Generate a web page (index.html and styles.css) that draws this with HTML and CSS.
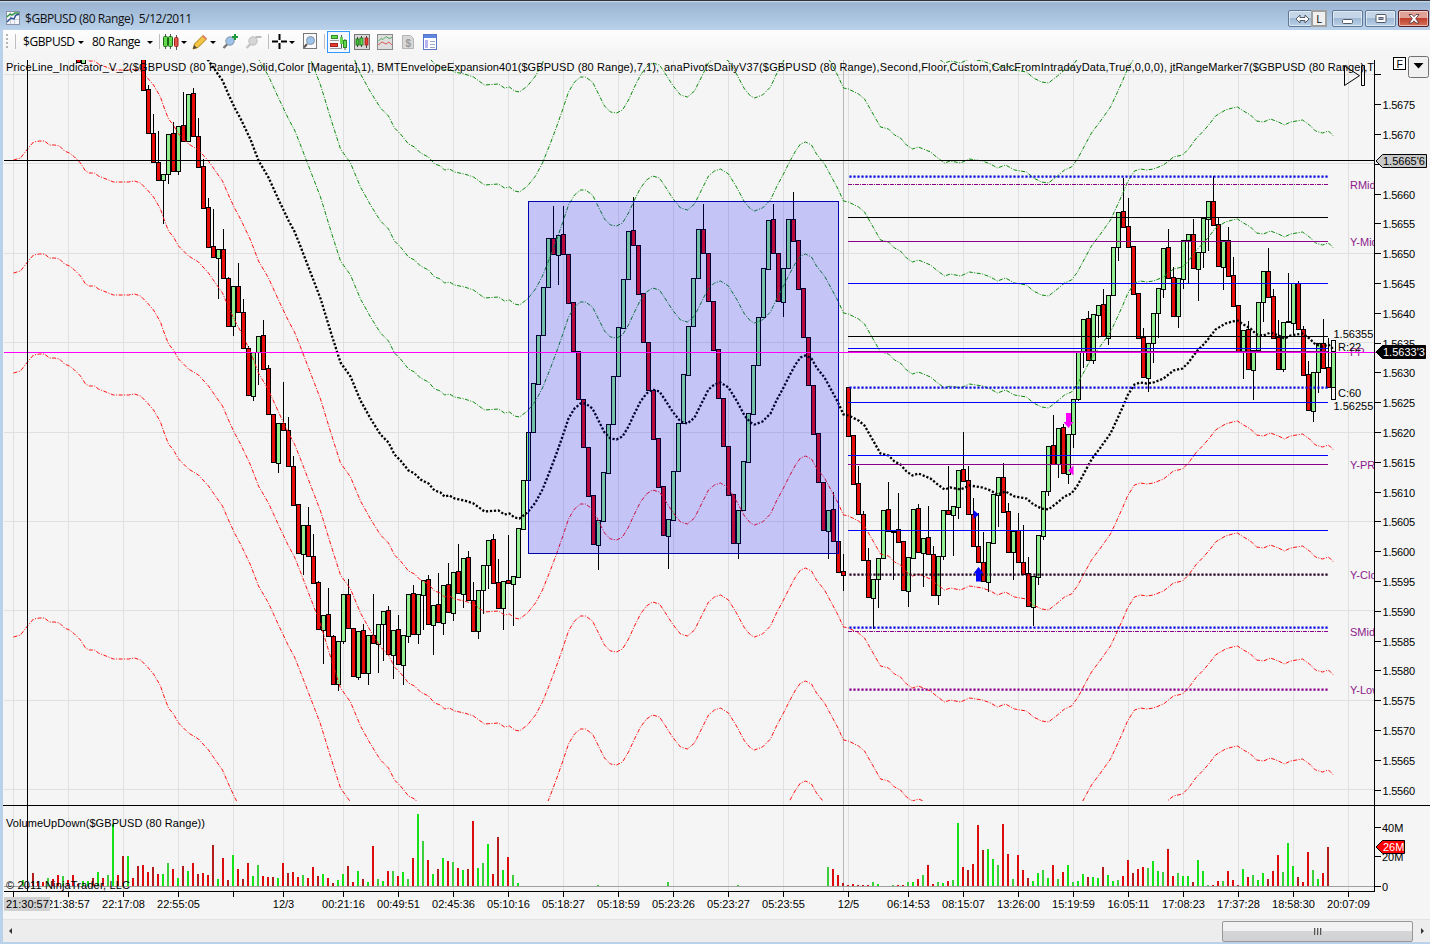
FILE: index.html
```html
<!DOCTYPE html>
<html lang="en">
<head>
  <meta charset="UTF-8">
  <title>$GBPUSD (80 Range)</title>
  <link rel="stylesheet" href="styles.css">
</head>
<body>
  <div class="window">
    <div class="titlebar">
      <svg class="app-icon" width="14" height="14" viewBox="0 0 14 14">
        <rect x=".5" y=".5" width="13" height="13" fill="#f4f6fa" stroke="#8a94a8"/>
        <path d="M1 4.5h12M1 8.5h12M4.5 1v12M8.5 1v12" stroke="#c9cfdd" fill="none"/>
        <path d="M1 6l3-3 2 1 3-2 4 0" stroke="#2f9a3c" stroke-width="1.4" fill="none"/>
        <path d="M1 11l4-4 3 1 2-4 3-1" stroke="#2b4f93" stroke-width="1.4" fill="none"/>
      </svg>
      <span class="title">$GBPUSD (80 Range)&nbsp; 5/12/2011</span>
      <div class="caption">
        <div class="btn link">
          <svg width="16" height="10" viewBox="0 0 16 10"><path d="M1 5l4-4v2.500h5v-2.500l4 4-4 4v-2.500h-5v2.500z" fill="#fff" stroke="#555b66"/></svg>
          <span class="link-letter">L</span>
        </div>
        <div class="btn">
          <svg width="12" height="12" viewBox="0 0 12 12"><rect x=".5" y="6.500" width="10" height="4" rx="1" fill="#fff" stroke="#555b66"/></svg>
        </div>
        <div class="btn">
          <svg width="12" height="10" viewBox="0 0 12 10"><rect x="1" y=".5" width="10" height="8" rx="1" fill="#fff" stroke="#555b66"/><rect x="4" y="3.500" width="4" height="2" fill="#8fa9c6" stroke="#555b66"/></svg>
        </div>
        <div class="btn close">
          <svg width="12" height="10" viewBox="0 0 12 10"><path d="M1 .5h3l2 2.200 2-2.200h3l-3.300 4.300 3.300 4.200h-3l-2-2.200-2 2.200h-3l3.300-4.200z" fill="#fff" stroke="#5b3a40" stroke-width=".9"/></svg>
        </div>
      </div>
    </div>

    <div class="toolbar">
      <span class="grip"></span>
      <span class="sep sep-first"></span>
      <span class="drop drop-symbol">$GBPUSD</span><i class="caret"></i>
      <span class="drop drop-range">80 Range</span><i class="caret"></i>
      <span class="sep"></span>
      <svg class="tool" width="16" height="16" viewBox="0 0 16 16">
        <path d="M2.500 0v15M7.500 0v15M13.500 1v15" stroke="#555"/>
        <rect x=".5" y="2.500" width="4" height="10" rx="1" fill="#62d84e" stroke="#1d6a14"/>
        <rect x="5.500" y="2.500" width="4" height="10" rx="1" fill="#62d84e" stroke="#1d6a14"/>
        <rect x="11.500" y="3.500" width="3.500" height="9" rx="1" fill="#e2574c" stroke="#a3201b"/>
      </svg><i class="caret"></i>
      <svg class="tool tool-pen" width="16" height="16" viewBox="0 0 16 16">
        <path d="M1 15l1.500-5L11 1.500 14.500 5 6 13.500z" fill="#f5c542" stroke="#a97c14"/>
        <path d="M1 15l1.200-3.800 2.700 2.600z" fill="#444"/><path d="M10 2.500L11.500 1 15 4.500 13.500 6z" fill="#e0876d"/>
      </svg><i class="caret"></i>
      <svg class="tool tool-zoomin" width="17" height="17" viewBox="0 0 17 17">
        <path d="M5.500 11L1.500 15" stroke="#777" stroke-width="2.400"/>
        <circle cx="8" cy="8" r="4.200" fill="#9cc4ea" stroke="#8696a8"/>
        <path d="M13 1v6M10 4h6" stroke="#1c9a3b" stroke-width="2"/>
      </svg>
      <svg class="tool tool-zoomout" width="17" height="17" viewBox="0 0 17 17">
        <path d="M5.500 11L1.500 15" stroke="#c4c4c4" stroke-width="2.400"/>
        <circle cx="8" cy="8" r="4.200" fill="#d6d6d6" stroke="#bcbcbc"/>
        <path d="M10.500 4h6" stroke="#bbb" stroke-width="2"/>
      </svg>
      <span class="sep"></span>
      <svg class="tool" width="15" height="15" viewBox="0 0 15 15">
        <path d="M0 7.500h6M9 7.500h6M7.500 0v6M7.500 9v6" stroke="#000" stroke-width="2"/>
      </svg><i class="caret"></i>
      <svg class="tool tool-box" width="16" height="17" viewBox="0 0 16 17">
        <rect x="1.500" y=".5" width="13" height="15" fill="#fafafa" stroke="#777"/>
        <path d="M5 11l-3 3.500" stroke="#555" stroke-width="2"/>
        <circle cx="8.500" cy="7.500" r="4" fill="#9cc4ea" stroke="#8696a8"/>
      </svg>
      <span class="sep"></span>
      <span class="active">
        <svg width="17" height="16" viewBox="0 0 17 16">
          <path d="M11.500 1v13M15 5v11" stroke="#555"/>
          <path d="M0 6.500h9M0 14.500h12" stroke="#999"/>
          <rect x="1.500" y="1.500" width="6" height="3" fill="#62d84e" stroke="#2f8a22"/>
          <rect x=".5" y="9.500" width="7" height="3" fill="#e03c31" stroke="#a3201b"/>
          <rect x="10" y="3" width="3" height="7" fill="#62d84e"/>
          <rect x="13.500" y="6.500" width="3" height="7" fill="#62d84e" stroke="#2f8a22"/>
        </svg>
      </span>
      <svg class="tool tool-frame" width="16" height="16" viewBox="0 0 16 16">
        <rect x=".5" y=".5" width="15" height="15" fill="#d9d9d9" stroke="#777"/>
        <path d="M3.500 3v10M7.500 2v11M12.500 2v12" stroke="#444"/>
        <rect x="2" y="5" width="3" height="6" fill="#3fbf35" stroke="#1d6a14" stroke-width=".8"/>
        <rect x="6" y="4" width="3" height="7" fill="#62d84e" stroke="#1d6a14" stroke-width=".8"/>
        <rect x="11" y="4" width="3" height="7" fill="#e03c31" stroke="#a3201b" stroke-width=".8"/>
      </svg>
      <svg class="tool tool-frame" width="16" height="16" viewBox="0 0 16 16">
        <rect x=".5" y=".5" width="15" height="15" fill="#dedede" stroke="#8a8a8a"/>
        <path d="M1 7.500l3-3 2 1 3-3 3 2 3-1" stroke="#56a860" fill="none"/>
        <path d="M1 11l4-3 4 2 3-2 3 3" stroke="#d95a55" fill="none"/>
      </svg>
      <svg class="tool tool-frame" width="16" height="16" viewBox="0 0 16 16">
        <path d="M2.500 1.500h8l3 3v10h-11z" fill="#d8d8d8" stroke="#b5b5b5"/>
        <text x="8" y="12.500" class="dollar">$</text>
      </svg>
      <svg class="tool tool-frame" width="14" height="16" viewBox="0 0 14 16">
        <rect x=".5" y=".5" width="13" height="15" fill="#fff" stroke="#5b76c4"/>
        <rect x="1" y="1" width="12" height="3" fill="#5c86e0"/>
        <rect x="2" y="6" width="3" height="8" fill="#b8b4f0"/>
        <path d="M7 7.500h5M7 10.500h5M7 13.500h5" stroke="#9aa6c8"/>
      </svg>
    </div>

    <svg id="chart" class="chart" width="1427" height="864" viewBox="3 55 1427 864">
      <defs>
        <clipPath id="plot"><rect x="4" y="60" width="1370" height="741"/></clipPath>
      </defs>
      <g id="grid" class="grid"></g>
      <g clip-path="url(#plot)">
        <g id="candles" class="crisp"></g>
        <g id="bands"></g>
        <g id="levels"></g>
        <g id="markers"></g>
        <rect class="region" x="528.5" y="201.5" width="310" height="352"/>
      </g>
      <g id="volume" class="crisp"></g>
      <g id="axes"></g>
    </svg>

    <div class="scrollbar">
      <i class="arrow left"></i>
      <div class="thumb"><i></i><i></i><i></i></div>
      <i class="arrow right"></i>
    </div>
  </div>
  <script src="chart.js"></script>
</body>
</html>
```
FILE: styles.css
```css
body {
  margin: 0;
  background: #b9d1ea;
  overflow: hidden;
  font-family: "Liberation Sans", Arial, sans-serif;
}

.window {
  box-sizing: border-box;
  width: 1430px;
  height: 944px;
  padding: 0 0 2px 3px;
  border-top: 1px solid #33333b;
  display: flex;
  flex-direction: column;
  background: #b9d1ea;
}

.titlebar {
  height: 29px;
  flex: none;
  margin-left: -3px;
  padding: 0 1px 0 6px;
  display: flex;
  align-items: center;
  background: linear-gradient(#cfdded 0, #9ab4d2 2px, #b9d1ea 100%);
}

.app-icon {
  margin: 4px 5px 0 0;
}

.title {
  font: 12px "Open Sans", sans-serif;
  letter-spacing: -0.44px;
  padding-top: 5px;
  color: #111;
}

.caption {
  margin-left: auto;
  padding-top: 6px;
  display: flex;
  gap: 2px;
}

.btn {
  box-sizing: border-box;
  width: 31px;
  height: 17px;
  display: flex;
  align-items: center;
  justify-content: center;
  border: 1px solid #5f7896;
  border-radius: 2px;
  box-shadow: inset 0 0 0 1px rgba(255, 255, 255, 0.5);
  background: linear-gradient(#c5d6e9 50%, #9fb8d3 50%, #b9d0e8);
}

.link {
  width: 39px;
  margin-right: 3px;
  justify-content: flex-end;
  padding-right: 0;
}

.link-letter {
  box-sizing: border-box;
  width: 16px;
  height: 17px;
  margin-right: -1px;
  border: 2px solid #a0a0a0;
  background: #f0f0f0;
  font: 11px/13px "Open Sans", sans-serif;
  text-align: center;
}

.close {
  border-color: #5a1f26;
  background: linear-gradient(#e0a296 50%, #c0402c 50%, #d2735a);
}

.toolbar {
  box-sizing: border-box;
  height: 25px;
  padding-bottom: 2px;
  flex: none;
  display: flex;
  align-items: center;
  font: 12px "Open Sans", sans-serif;
  letter-spacing: -0.42px;
  background: linear-gradient(#fefefe, #f4f4f4);
}

.grip {
  width: 2px;
  height: 15px;
  margin-left: 3px;
  background: repeating-linear-gradient(#b5b5b5 0 2px, transparent 2px 4px);
}

.sep {
  width: 1px;
  height: 15px;
  margin: 0 3px 0 6px;
  background: #bdbdbd;
}

.sep-first {
  margin: 0 7px;
}

.drop {
  width: 50px;
}

.drop-range {
  margin-left: 8px;
}

.caret {
  flex: none;
  width: 0;
  height: 0;
  border: 3px solid transparent;
  border-top-color: #000;
  border-bottom: 0;
  margin: 1px 0 0 2px;
}

.drop + .caret {
  margin-left: 5px;
}

.tool {
  flex: none;
}

.tool-pen {
  margin-left: 5px;
}

.tool-zoomin {
  margin-left: 6px;
}

.tool-zoomout {
  margin-left: 6px;
}

.tool-box {
  margin-left: 7px;
}

.active {
  box-sizing: border-box;
  width: 23px;
  height: 22px;
  margin: 0 0 0 -1px;
  display: flex;
  align-items: center;
  justify-content: center;
  border: 1px solid #3399ff;
  background: #f3f8fe;
}

.tool-frame {
  margin-left: 4px;
}

.tool-frame + .tool-frame {
  margin-left: 7px;
}

.dollar {
  font: bold 10px "Liberation Sans", sans-serif;
  fill: #9a9a9a;
  text-anchor: middle;
}

/* chart */
.chart {
  flex: none;
  display: block;
  background: #f5f5f5;
  font-size: 11px;
}

.crisp,
.grid {
  shape-rendering: crispEdges;
}

.grid path {
  stroke: #e0e0e0;
}

.grid .session {
  stroke: #b8b8b8;
}

.wick,
.body {
  fill: #000;
}

.up {
  fill: #90ee90;
}

.down {
  fill: #e60c0c;
}

.band {
  fill: none;
  stroke-width: 1;
  stroke-dasharray: 4 1.5 1 1.5;
}

.band.red {
  stroke: #ff1010;
}

.band.green {
  stroke: #0a8a0a;
}

.average {
  fill: none;
  stroke: #000;
  stroke-width: 2.3;
  stroke-dasharray: 2.2 1.8;
}

.axis {
  fill: none;
  stroke: #000;
  shape-rendering: crispEdges;
}

.base {
  stroke: #a0a0a0;
}

.level {
  fill: none;
}

.blue { stroke: #0000ff; }
.black { stroke: #000; }
.purple { stroke: #8b008b; }
.magenta { stroke: #ff00ff; }
.navy { stroke: #0a0ae0; }
.plum { stroke: #22001e; }

.dots {
  stroke-width: 2.2;
  stroke-dasharray: 2.2 1.8;
}

.dashdot {
  stroke-dasharray: 4 1 1 1;
}

.region {
  fill: rgba(0, 0, 255, 0.2);
  stroke: #0000b0;
  shape-rendering: crispEdges;
}

.vol-up { fill: #16e016; }
.vol-up.alt { fill: #3ccf3c; }
.vol-down { fill: #dc0c0c; }
.vol-down.alt { fill: #b41c1c; }

.label {
  fill: #000;
}

.mid {
  text-anchor: middle;
}

.pivot {
  fill: #8b1a8b;
}

.tag-text {
  fill: #fff;
}

/* scrollbar */
.scrollbar {
  flex: 1;
  box-sizing: border-box;
  display: flex;
  align-items: center;
  border-top: 1px solid #e2e2e2;
  background: #ededed;
}

.arrow {
  width: 0;
  height: 0;
  border: 3px solid transparent;
}

.left {
  border-right-color: #333;
  border-left: 0;
  margin-left: 6px;
}

.right {
  border-left-color: #333;
  border-right: 0;
  margin-left: 8px;
  margin-right: 6px;
}

.thumb {
  box-sizing: border-box;
  width: 191px;
  height: 21px;
  margin-left: auto;
  display: flex;
  align-items: center;
  justify-content: center;
  gap: 1px;
  border: 1px solid #979797;
  border-radius: 2px;
  background: linear-gradient(#f2f2f2 45%, #d6d6d8 50%, #d0d0d2);
}

.thumb i {
  width: 2px;
  height: 7px;
  background: linear-gradient(90deg, #555 50%, #bbb 50%);
}
```
FILE: chart.js
```javascript
const NS = "http://www.w3.org/2000/svg";

function add(parent, tag, attrs, text) {
  const el = document.createElementNS(NS, tag);
  for (const k in attrs) el.setAttribute(k, attrs[k]);
  if (text !== undefined) el.textContent = text;
  (typeof parent === "string" ? document.getElementById(parent) : parent).appendChild(el);
  return el;
}

// One candle every 5px: colour + body top, body bottom, tip of the wick
const candles = [
  [78, "r58,62 g58,63"],
  [143, `r50,90 r89,133,85 r133,162,114 r162,180,131 g174,180,223 g134,174,183 r133,171,122 g126,171,174
   r125,141,92 g94,141 r93,136,88 r136,167,118 r166,208,159 r207,247,198 r246,257,209 g249,258,298
   r249,278,229 r278,326,277 g286,326,335 r286,312,263 r312,348,299 r348,395,346 g352,396,400 g336,352,384
   r335,369,320 r368,414,365 r414,462 g423,463,472 r423,430,382 r430,466,417 r466,505,456 r504,553
   g525,554,574 r525,556,507 r556,583,534 r582,629,581 g615,630,663 r614,636,588 r636,684,635 g641,684,690
   g594,641,643 r594,628,579 r628,676 g631,677,679 r630,673,624 g635,673,684 r635,643,594 g624,644,672
   g611,624,660 r610,654,606 g630,655,678 r629,664,615 g635,665,684 g594,636,642 r593,634,585 g594,634,643
   g580,595,629 r579,624,575 g605,625,654 r604,622,573 g585,623,634 r584,612,563 g572,613,620 r571,593,544
   g558,594,607 r557,600,551 r600,631,582 g590,631,638 g565,590,613 g540,565,588 r539,583,534 r582,608,559
   g581,608,629 r580,583,535 g576,584,625 g528,577 g480,529 g432,480 g383,432 g335,384
   g287,335 g238,287 r238,254,206 g235,255,284 r234,254,206 r254,303 r302,351 r351,399
   r399,447 r447,496 r495,544 g520,545,569 g472,521 g424,473 g376,424 g327,376
   g279,328 g231,279 r230,245,197 r245,294 r293,342 r342,390 r390,439 r438,487
   r486,535 g519,536,568 g471,520 g423,471 g374,423 g326,375 g278,326 g229,278
   r229,253,204 r253,301 r301,350 r349,398 r398,446 r446,495 r494,543 g510,543,558
   g461,510 g413,462 g365,414 g317,365 g268,317 g220,269 r219,253,204 r253,301
   g268,302,316 g219,268 r219,241,192 r240,289 r288,337 r337,385 r385,434 r433,482
   r482,530 g510,531,558 r509,541,492 r541,572 r571,575,554,590 r387,436 r435,484 r483,514,466
   r514,560,511 r560,597,548 g579,598,628 g558,579,607 g510,558 r509,531,482 g531,532,579 r529,542,493
   r541,590 g557,591,606 g509,558 r508,552,504 g538,553,586 r537,554,506 r554,595,546 g556,595,604
   g510,556,559 r510,514,466 g506,515,555 g470,507,518 r469,481,432 r480,514,466 r514,546,498 r546,562,513
   r562,581,532 g542,582,591 g494,543 g477,495,526 r477,512,463 r511,552,503 g531,552,579 r530,562,513
   r562,574,525 r573,606,557 g576,607,625 g535,577,584 g491,536,539 g446,491,495 r445,464,415 g428,464,477
   r427,473,424 g434,474,483 g399,434,447 g352,399,400 g319,352,367 r318,360,311 g314,360,363 g305,315,337
   r304,336,289 g295,338,344 g247,295 g212,247,260 r211,227,178 r226,247,198 r246,294 r293,338
   r337,377,328 g343,378,391 g313,343,362 g288,313,337 g248,289,297 r247,278,229 r277,316,267 g278,316,327
   g240,279,288 g234,240,283 r234,268,219 g252,269,300 g218,252,267 g201,219,250 r201,225,176 r224,266,217
   g240,267,289 r240,276,227 r275,306,257 r305,352 g330,352,378 r329,369,321 g350,370,399 g302,350
   g271,302,321 r271,297,248 r296,338,289 r337,369,320 g322,369,371 r321,322,273 g283,323,333 r283,329,281
   r329,375,326 r374,410,361 g372,411,421 g343,372,392 r343,368,319 r367,387,338 g352,387`]
];

// Moving average; the envelopes are the same line shifted up and down
const average = `13,-53 20,-55 27,-64 33,-71 39,-72 44,-72 49,-68 54,-68 59,-67 64,-62 69,-60 74,-56 80,-50 85,-42
  89,-40 94,-40 98,-37 103,-35 108,-33 113,-31 128,-31 134,-32 140,-30 147,-23 153,-16 160,-4 163,5 168,18
  173,24 178,33 188,43 198,49 208,60 217,73 222,80 228,94 234,107 240,118 250,139 258,160 268,177 278,199
  288,220 294,231 300,246 310,272 320,298 331,334 340,362 350,376 360,400 370,418 380,434 388,442 394,454
  400,460 408,470 414,473 420,479 428,483 434,490 440,492 444,496 449,495 454,498 464,500 473,503 484,511
  498,510 504,514 509,513 514,517 519,518 527,512 535,502 542,489 550,469 556,453 562,436 568,418 574,408
  580,403 585,403 592,408 598,420 604,432 610,438 616,439 622,436 628,426 634,413 640,401 646,393 652,389
  659,391 665,400 672,411 680,421 687,423 694,417 700,405 708,389 714,384 720,382 728,387 736,400 744,415
  750,422 754,424 762,421 770,413 776,400 783,387 789,375 795,364 800,357 805,355 811,358 816,367 824,377
  830,388 837,401 843,414 848,415 858,420 864,425 872,439 880,453 888,455 894,461 900,464 906,471 912,475
  918,473 930,478 936,483 944,489 950,487 960,489 969,485 982,487 990,490 997,494 1005,491 1014,496
  1026,498 1033,504 1041,508 1048,509 1057,502 1064,496 1071,493 1077,485 1085,470 1091,459 1100,447
  1110,433 1117,418 1122,407 1127,395 1134,384 1140,382 1146,383 1153,382 1163,378 1173,370 1182,368
  1188,362 1196,351 1203,344 1209,337 1215,329 1225,323 1232,321 1237,320 1243,324 1250,328 1256,334
  1263,335 1270,332 1278,335 1284,338 1290,335 1302,333 1309,338 1315,344 1322,346 1328,344 1333,349`;

// One bar every 5px: colour + height
const volume = [
  [23, `g6`],
  [33, `r13 r5 r4 g8 r7 r11 g10 r6 r11 r2 g5 g5 r8 g14 r8 g11 g62 r11 r30 g30 r8 r20 r21 r14 r19 r12 g12 g23 r17
    g8 r20 g15 r23 r12 r13 r11 r41 g7 r28 r6 g31 r17 r7 r23 g10 g21 r10 r9 r9 g8 r23 r13 r14 r9 g11 r8 r19 r10
    g12 r8 r3 g6 g12 r20 r4 g15 r7 g4 r40 g7 g5 r15 g15 r10 g14 g7 r28 g72 g45 r26 g12 r17 g28 r25 g24 r18 g16
    r17 r65 g18 g23 g42 r12 r49 g16 r29 g11 g3`],
  [598, "g1"], [668, "g4"], [738, "g1"],
  [828, "g19 r17 r11 r3 r1 r2 r1 r1 r1 g4 g2"],
  [893, `g1 r1 r1 g4 g4 r7 g11 r21 r2 g4 g3 r5 g6 g63 r19 r16 r22 r61 r36 g37 g27 g21 r62 r32 g7 r31 r16 r8 g5
    g13 g16 g8 r21 g7 r14 g21 g4 g5 g12 r9 g9 g8 r19 g11 g5 g6 r10 r26 r13 r17 r19 g18 g25 g15 g14 r37 r10 g13
    g10 g10 r4 g26 g15 g1 r1 r5 g5 r15 r6 r1 g17 r9 g11 g6 g13 r7 r15 r31 g14 g43 g20 r9 r4 r34 g16 g7 r13 r39`]
];

const times = [
  [13, ""], [68, "21:38:57"], [123, "22:17:08"], [178, "22:55:05"], [233, ""], [283, "12/3"],
  [343, "00:21:16"], [398, "00:49:51"], [453, "02:45:36"], [508, "05:10:16"], [563, "05:18:27"],
  [618, "05:18:59"], [673, "05:23:26"], [728, "05:23:27"], [783, "05:23:55"], [848, "12/5"],
  [908, "06:14:53"], [963, "08:15:07"], [1018, "13:26:00"], [1073, "15:19:59"], [1128, "16:05:11"],
  [1183, "17:08:23"], [1238, "17:37:28"], [1293, "18:58:30"], [1348, "20:07:09"]
];

// Grid
times.forEach(([x]) => add("grid", "path", { d: `M${x + 0.5} 60V891` }));
for (let i = 0; i < 9; i++) {
  add("grid", "path", { d: `M4 ${Math.round(74 + i * 89.4) + 0.5}H1374` });
}
add("grid", "path", { d: "M843.5 60V891", class: "session" });

// Candles
candles.forEach(([start, list]) => {
  list.trim().split(/\s+/).forEach((item, i) => {
    const x = start + i * 5;
    const [top, bottom, ...tips] = item.slice(1).split(",").map(Number);
    const high = Math.min(top, ...tips);
    const low = Math.max(bottom, ...tips);
    add("candles", "rect", { class: "wick", x: x, y: high, width: 1, height: low - high + 1 });
    add("candles", "rect", { class: "body", x: x - 2, y: top, width: 5, height: bottom - top + 1 });
    if (bottom - top > 1) {
      add("candles", "rect", { class: item[0] === "g" ? "up" : "down", x: x - 1, y: top + 1, width: 3, height: bottom - top - 1 });
    }
  });
});

// Envelopes
[101, 213, 326, 426, 690].forEach(offset => {
  add("bands", "polyline", { class: "band red", points: average, transform: `translate(0.5 ${offset})` });
  add("bands", "polyline", { class: "band green", points: average, transform: `translate(0.5 ${-offset})` });
});
add("bands", "polyline", { class: "average", points: average, transform: "translate(0.5 0.5)" });

// Pivot levels
[
  [176.6, "navy dots"], [184.5, "purple dashdot"], [217.5, "black"], [241.5, "purple"], [283.5, "blue"],
  [336.5, "black"], [348.5, "blue"], [351.5, "purple"], [387.6, "navy dots"], [402.5, "blue"],
  [455.5, "blue"], [464.5, "purple"], [530.5, "blue"], [574.6, "plum dots"], [627.6, "navy dots"],
  [631.5, "purple dashdot"], [689.6, "purple dots"]
].forEach(([y, cls]) => {
  const x = cls.includes("dots") ? 849.4 : 848;
  add("levels", "path", { class: "level " + cls, d: `M${x} ${y}H1328` });
});

// Trade arrows and range marker
add("markers", "path", { d: "M1066 413h5v9h2.500l-5 6-5-6h2.500z", fill: "#ff00ff" });
add("markers", "path", { d: "M1068 470.500l5.500-5v10z", fill: "#ff00ff" });
add("markers", "path", { d: "M976 581.500v-8h-2.500l5-6.500 5 6.500h-2.500v8z", fill: "#0000ff" });
add("markers", "path", { d: "M979 514.500l-5.500-4.500v9z", fill: "#0000ff" });
add("markers", "path", { d: "M1331.500 340.500h4v11h-4zM1331.500 387.500h4v12h-4z", class: "axis" });
[["RMid", 189], ["Y-Mid", 246], ["PP", 356], ["Y-PRL", 469], ["Y-Close", 579], ["SMid", 636], ["Y-Low", 694]]
  .forEach(([t, y]) => add("markers", "text", { class: "pivot", x: 1350, y: y }, t));
[["1.56355", 1333.5, 338], ["R:22", 1338, 351], ["C:60", 1338, 397], ["1.56255", 1333.5, 410]]
  .forEach(([t, x, y]) => add("markers", "text", { class: "label", x: x, y: y }, t));

// Volume
volume.forEach(([start, list]) => {
  list.trim().split(/\s+/).forEach((item, i) => {
    const h = Number(item.slice(1));
    const cls = (item[0] === "g" ? "vol-up" : "vol-down") + (i % 3 === 0 ? " alt" : "");
    add("volume", "rect", { class: cls, x: start + i * 5 - 1, y: 886 - h, width: 2, height: h });
  });
});
add("volume", "path", { class: "axis base", d: "M4 886.5H1374" });

// Axes
add("axes", "path", { class: "axis magenta", d: "M4 352.5H1380" });
add("axes", "path", { class: "axis", d: "M4 160.5H1375M27.5 60V891M1374.5 60V891M4 891.5H1375M3 805.5H1430" });
for (let i = 0; i <= 24; i++) {
  const y = Math.round(74.3 + i * 29.8);
  add("axes", "path", { class: "axis", d: `M1375 ${y + 0.5}h6` });
  if (i > 0 && i !== 3) {
    add("axes", "text", { class: "label", x: 1382.5, y: y + 4.5, textLength: 32.5 }, (1.568 - i * 0.0005).toFixed(4));
  }
}
[[827, "40M"], [856, "20M"], [886, "0"]].forEach(([y, t]) => {
  add("axes", "path", { class: "axis", d: `M1375 ${y + 0.5}h6` });
  add("axes", "text", { class: "label", x: 1382, y: y + 5 }, t);
});

function tag(y, right, fill, text, cls) {
  add("axes", "path", { d: `M1376 ${y}l6.500-6.500h${right - 1382.5}v13h${1382.5 - right}z`, fill: fill, stroke: "#000" });
  add("axes", "text", { class: cls, x: 1383, y: y + 4 }, text);
}
tag(161, 1426.5, "#c8c8c8", "1.5665'6", "label");
tag(352, 1425.5, "#000", "1.5633'3", "tag-text");
tag(847, 1404.5, "#ff0000", "26M", "tag-text");

times.forEach(([x, t]) => {
  add("axes", "path", { class: "axis", d: `M${x + 0.5} 892v5` });
  if (t) add("axes", "text", { class: "label mid", x: x + 0.5, y: 908 }, t);
});
add("axes", "rect", { x: 4, y: 897, width: 46, height: 14, fill: "#d0d0d0" });
add("axes", "text", { class: "label", x: 6, y: 908 }, "21:30:57");

// Captions
[
  ["PriceLine_Indicator_V_2($GBPUSD (80 Range),Solid,Color [Magenta],1),", 6, 368],
  ["BMTEnvelopeExpansion401($GBPUSD (80 Range),7,1),", 377, 282],
  ["anaPivotsDailyV37($GBPUSD (80 Range),Second,Floor,Custom,CalcFromIntradayData,True,0,0,0),", 664, 503],
  ["jtRangeMarker7($GBPUSD (80 Range),T", 1170, 204]
].forEach(([t, x, w]) => add("axes", "text", { class: "label", x: x, y: 71, textLength: w }, t));
add("axes", "text", { class: "label", x: 6, y: 827, textLength: 199 }, "VolumeUpDown($GBPUSD (80 Range))");
add("axes", "text", { class: "label", x: 6, y: 889, textLength: 124 }, "© 2011 NinjaTrader, LLC");

// Corner controls
add("axes", "path", { d: "M1344.500 66v19.500l15-9.800zM1361.500 65.500h3v20h-3z", fill: "none", stroke: "#000" });
add("axes", "rect", { x: 1393.5, y: 57.5, width: 12, height: 12, fill: "#fff", stroke: "#000" });
add("axes", "text", { class: "label", x: 1396.5, y: 67.5, "font-size": 10.5 }, "F");
add("axes", "rect", { x: 1408.5, y: 56.5, width: 20, height: 21, rx: 2, fill: "#f0f0f0", stroke: "#707070" });
add("axes", "path", { d: "M1413.500 63h10l-5 5.500z", fill: "#000" });
```
